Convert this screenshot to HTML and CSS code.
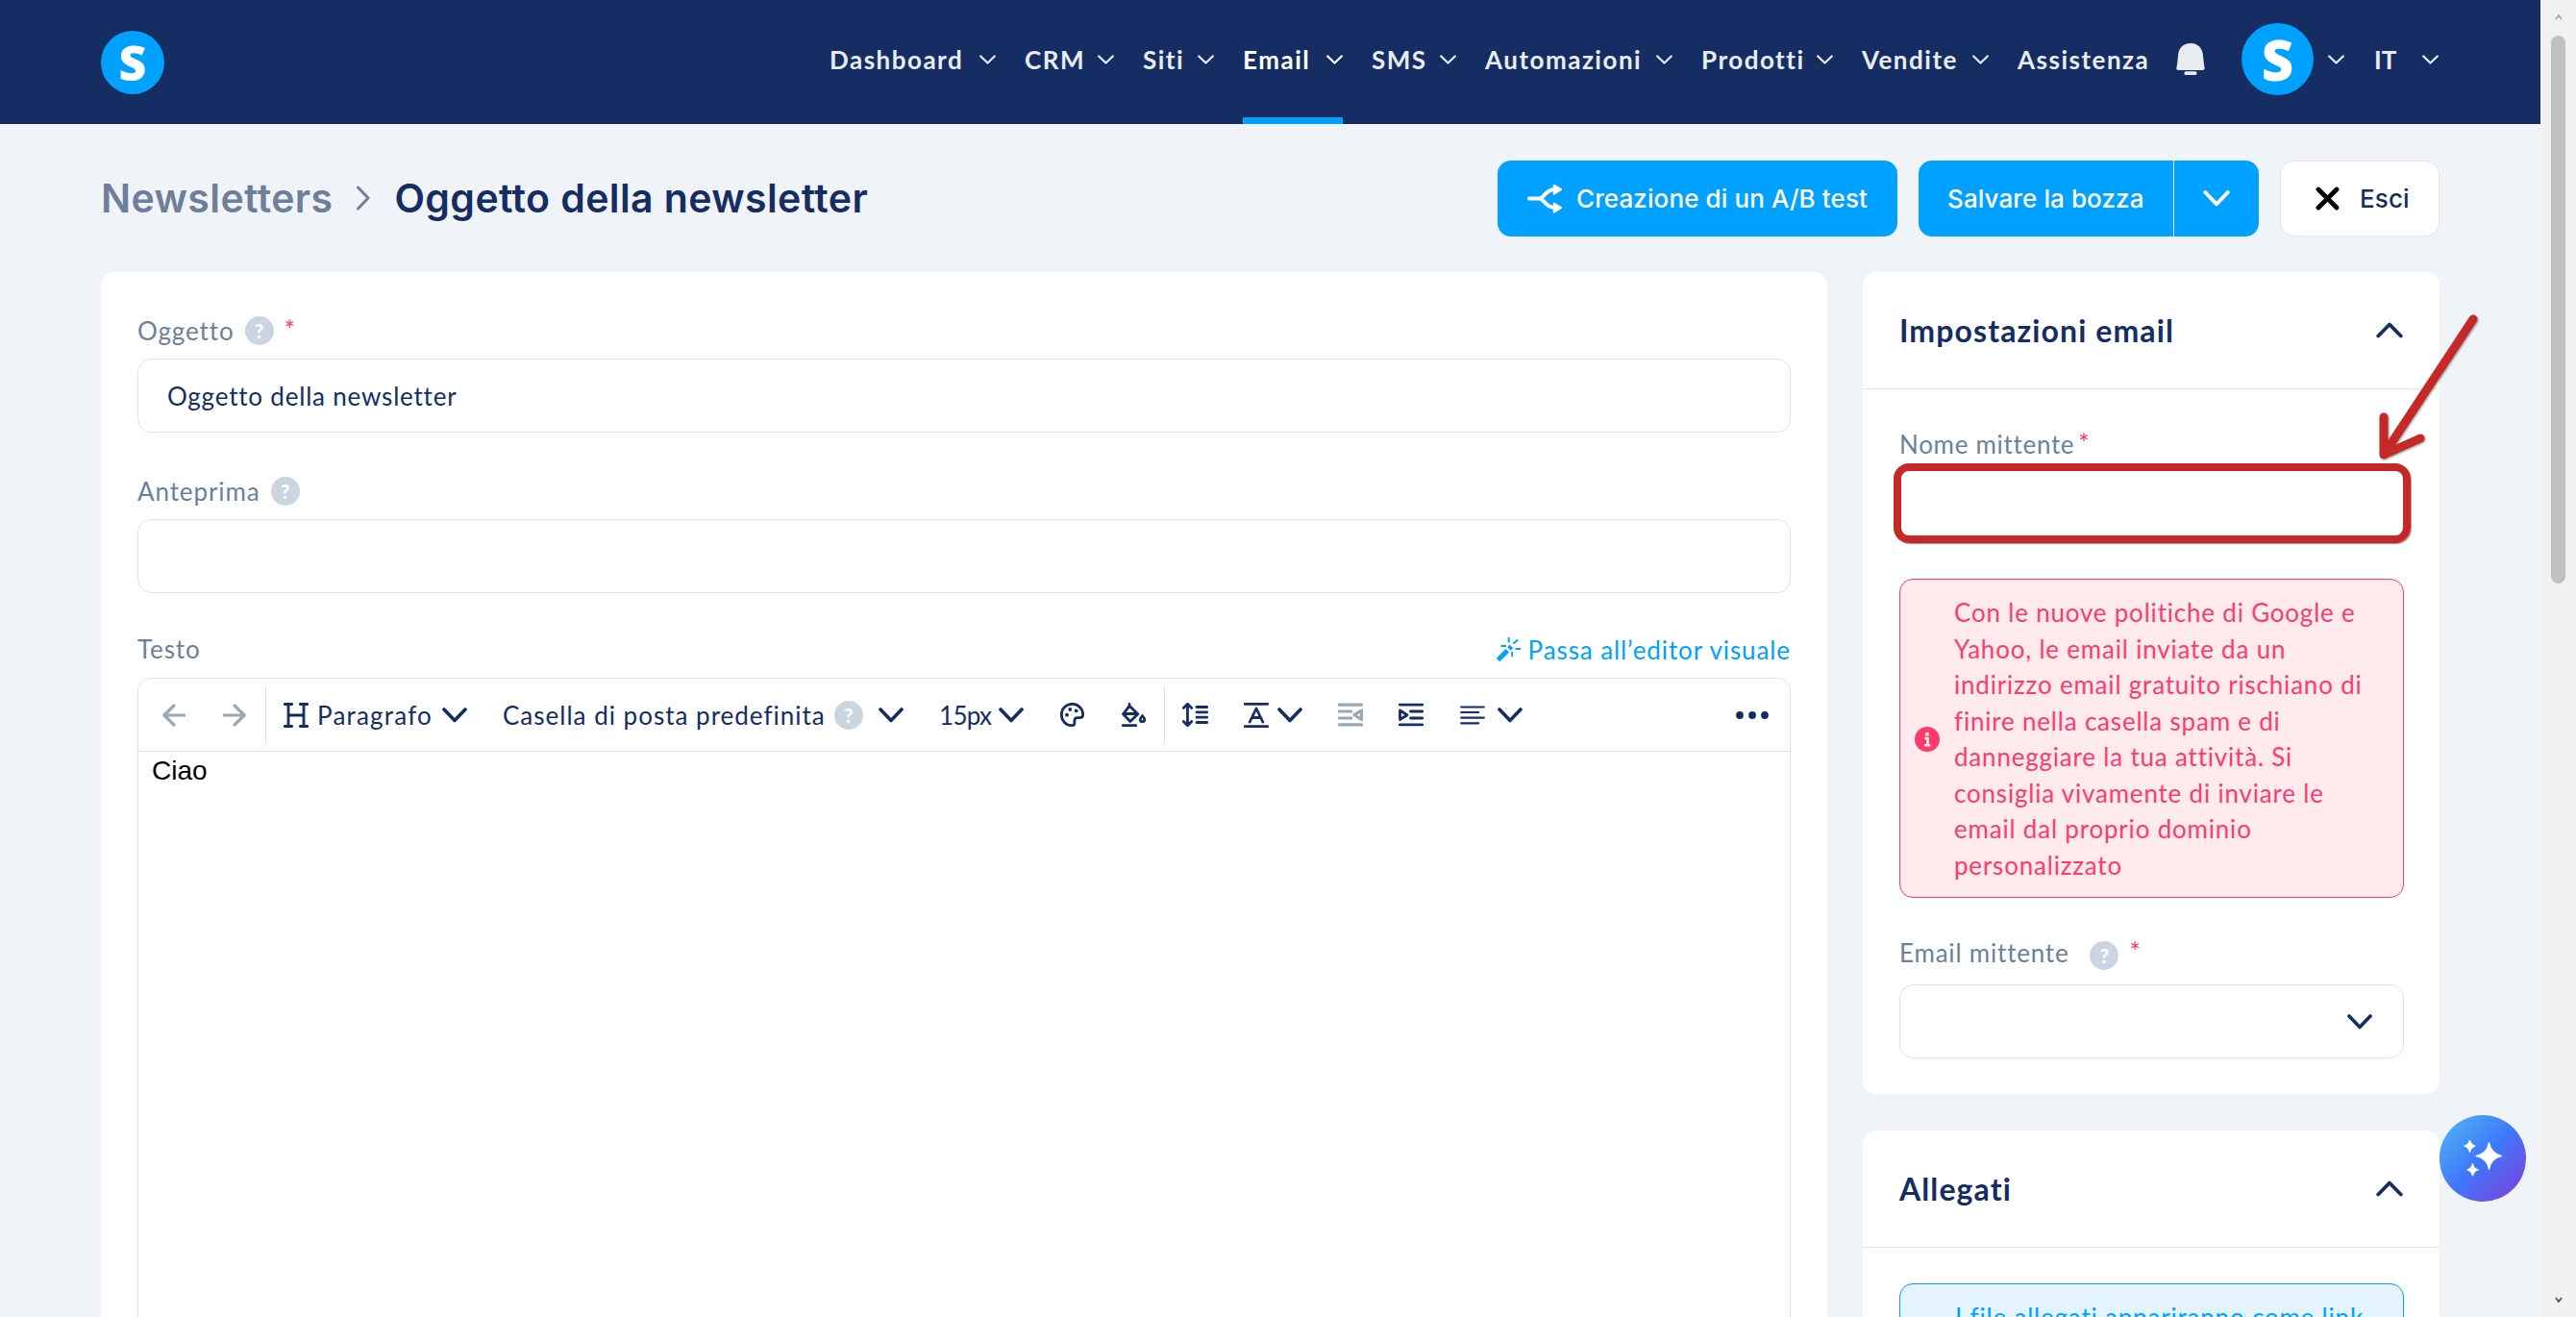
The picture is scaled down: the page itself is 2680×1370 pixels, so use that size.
FILE: index.html
```html
<!DOCTYPE html>
<html lang="it">
<head>
  <meta charset="UTF-8" />
  <meta name="viewport" content="width=device-width, initial-scale=1.0" />
  <title>Oggetto della newsletter</title>
  <link rel="stylesheet" href="styles.css">
</head>
<body>

  <svg class="defs" width="0" height="0">
    <symbol id="down" viewBox="0 0 26 16"><path d="M2 2l11 11.5L24 2" fill="none" stroke="currentColor" stroke-width="3.6" stroke-linecap="round" stroke-linejoin="round"/></symbol>
    <symbol id="up" viewBox="0 0 28 17"><path d="M2.2 14.5L14 2.5l11.8 12" fill="none" stroke="currentColor" stroke-width="3.8" stroke-linecap="round" stroke-linejoin="round"/></symbol>
    <symbol id="nav-down" viewBox="0 0 17 10"><path d="M1.2 1.5l7.3 7 7.3-7" fill="none" stroke="currentColor" stroke-width="2.2" stroke-linecap="round" stroke-linejoin="round"/></symbol>
  </svg>

  <div class="page">
    <header class="topbar">
      <div class="logo">S</div>
      <nav class="nav">
        <a class="nav-item dashboard"><span>Dashboard</span><svg><use href="#nav-down"/></svg></a>
        <a class="nav-item crm"><span>CRM</span><svg><use href="#nav-down"/></svg></a>
        <a class="nav-item siti"><span>Siti</span><svg><use href="#nav-down"/></svg></a>
        <a class="nav-item active"><span>Email</span><svg><use href="#nav-down"/></svg></a>
        <a class="nav-item sms"><span>SMS</span><svg><use href="#nav-down"/></svg></a>
        <a class="nav-item automazioni"><span>Automazioni</span><svg><use href="#nav-down"/></svg></a>
        <a class="nav-item prodotti"><span>Prodotti</span><svg><use href="#nav-down"/></svg></a>
        <a class="nav-item vendite"><span>Vendite</span><svg><use href="#nav-down"/></svg></a>
        <a class="nav-item assistenza"><span>Assistenza</span></a>
        <svg class="bell" viewBox="0 0 30 33"><path d="M15 0C7.500 0 2.500 5 2 13L1 22.500Q0 26 .5 27Q1 28 3 28H27Q29 28 29.500 27Q30 26 29 22.500L28 13C27.500 5 22.500 0 15 0z" fill="currentColor"/><rect x="8.500" y="29.300" width="13" height="3.700" rx="1.600" fill="currentColor"/></svg>
        <div class="avatar">S</div>
        <svg class="avatar-arrow"><use href="#nav-down"/></svg>
        <a class="nav-item lang"><span>IT</span><svg><use href="#nav-down"/></svg></a>
      </nav>
    </header>

    <div class="page-head">
      <div class="breadcrumb">
        <a>Newsletters</a>
        <svg viewBox="0 0 16 26"><path d="M2.500 2l10.500 11L2.500 24" fill="none" stroke="currentColor" stroke-width="3" stroke-linecap="round" stroke-linejoin="round"/></svg>
        <h1>Oggetto della newsletter</h1>
      </div>
      <div class="actions">
        <button class="btn ab-test">
          <svg viewBox="0 0 36 32"><path d="M2 15.500h10.500c5 0 6-9.500 16-9.500M12.500 15.500c5 0 6 9.500 16 9.500" fill="none" stroke="#fff" stroke-width="4" stroke-linecap="round"/><path d="M27.500 1.500v9.500l8-5zM27.500 20.500v9.500l8-5z" fill="#fff" stroke="#fff" stroke-width="1.500" stroke-linejoin="round"/></svg>
          <span>Creazione di un A/B test</span>
        </button>
        <div class="split">
          <button class="btn save"><span>Salvare la bozza</span></button>
          <button class="btn more"><svg><use href="#down"/></svg></button>
        </div>
        <button class="btn exit">
          <svg viewBox="0 0 25 25"><path d="M3 3l19 19M22 3L3 22" stroke="#000" stroke-width="4.800" stroke-linecap="round"/></svg>
          <span>Esci</span>
        </button>
      </div>
    </div>

    <main class="content">
      <section class="card editor-card">
        <div class="field">
          <label>Oggetto <i class="help">?</i><b class="req">*</b></label>
          <div class="input">Oggetto della newsletter</div>
        </div>
        <div class="field">
          <label>Anteprima <i class="help">?</i></label>
          <div class="input"></div>
        </div>
        <div class="text-row">
          <label>Testo</label>
          <a class="visual-link">
            <svg viewBox="0 0 26 26"><path d="M2.500 23.500L12.300 13.700" stroke="currentColor" stroke-width="5"/><path d="M14 12l2.500-2.500" stroke="currentColor" stroke-width="5"/><path d="M13.700 0v5.500M5.500 9H11M18.500 6.500l4.500-4M20.500 12H26M17.200 15v5" stroke="currentColor" stroke-width="1.900"/></svg>
            <span>Passa all’editor visuale</span>
          </a>
        </div>
        <div class="editor">
          <div class="toolbar">
            <svg class="muted i24" viewBox="0 0 24 24"><path d="M23 12H2M12 2L1.800 12 12 22" /></svg>
            <svg class="muted i24" viewBox="0 0 24 24"><path d="M1 12h21M12 2l10.200 10L12 22"/></svg>
            <span class="sep"></span>
            <svg class="i26" viewBox="0 0 26 26"><path d="M5 1.500v23M21 1.500v23M5 13h16M1.300 1.500h7.400M17.300 1.500h7.400M1.300 24.500h7.400M17.300 24.500h7.400"/></svg>
            <span class="t-par">Paragrafo</span>
            <svg class="arr"><use href="#down"/></svg>
            <span class="t-font">Casella di posta predefinita</span>
            <i class="help">?</i>
            <svg class="arr"><use href="#down"/></svg>
            <span class="t-size">15px</span>
            <svg class="arr"><use href="#down"/></svg>
            <svg class="i25" viewBox="0 0 25 25"><path d="M12.500 1.300C6 1.300 1.300 6.300 1.300 12.500S6 23.700 12 23.700c1.800 0 2.900-1 2.900-2.500v-2.700c0-1.700 1.100-2.800 2.700-2.800h2.700c2.200 0 3.400-1.300 3.400-3.500C23.500 6 18.800 1.300 12.500 1.300z"/><g class="solid"><circle cx="10.300" cy="7" r="1.900"/><circle cx="16.700" cy="8.300" r="1.900"/><circle cx="7" cy="12.700" r="1.900"/></g></svg>
            <svg class="i25" viewBox="0 0 25 25"><path d="M8 1.500v3M8 3.300l8.800 8.500L8.800 19.500 1.500 11.800zM2 11.500h14.500M1.300 23.700h13.500M21.500 13.500c-1.700 2.200-2.300 3-2.300 3.900a2.300 2.300 0 0 0 4.600 0c0-.9-.6-1.700-2.300-3.900z"/></svg>
            <span class="sep"></span>
            <svg class="i27" viewBox="0 0 27 25"><path d="M5.500 1.500v22M1.300 5.500l4.200-4.200 4.200 4.200M1.300 19.500l4.200 4.200 4.200-4.200M15 4.500h10.700M15 9.800h10.700M15 15.200h10.700M15 20.500h10.700"/></svg>
            <svg class="i26" viewBox="0 0 26 26"><path d="M1.300 1.300h23.400M1.300 24.700h23.400M6.200 20L13 6l6.800 14M8.500 15.500h9"/></svg>
            <svg class="arr"><use href="#down"/></svg>
            <svg class="muted i26" viewBox="0 0 26 26"><path d="M1.300 2.200h23.400M1.300 9h12.500M1.300 16h12.500M1.300 22.800h23.400M24.500 8v9.500L17 12.700z"/></svg>
            <svg class="i26" viewBox="0 0 26 26"><path d="M1.300 2.200h23.400M12.500 9h12.200M12.500 16h12.200M1.300 22.800h23.400M1.500 8v9.500L9 12.700z"/></svg>
            <svg class="i26" viewBox="0 0 26 26"><path d="M1.200 4.500h23.600M1.200 10h18M1.200 15.700h23.600M1.200 21.300h18" stroke-width="2.200"/></svg>
            <svg class="arr"><use href="#down"/></svg>
            <svg class="dots" viewBox="0 0 34 8"><g class="solid"><circle cx="4" cy="4" r="3.900"/><circle cx="17" cy="4" r="3.900"/><circle cx="30" cy="4" r="3.900"/></g></svg>
          </div>
          <div class="editor-body">Ciao</div>
        </div>
      </section>

      <aside class="side">
        <section class="card">
          <div class="card-head">
            <h2>Impostazioni email</h2>
            <svg><use href="#up"/></svg>
          </div>
          <div class="card-body">
            <label class="name-label">Nome mittente<b class="req">*</b></label>
            <div class="input name-input">
              <div class="highlight"></div>
              <svg class="pointer" viewBox="0 0 120 160"><path d="M105 13L12 154M12 115v39M12 154l38-17" fill="none" stroke="currentColor" stroke-width="9" stroke-linecap="round" stroke-linejoin="round"/></svg>
            </div>
            <div class="alert danger">
              <svg viewBox="0 0 26 26"><circle cx="13" cy="13" r="13" fill="currentColor"/><circle cx="13" cy="7.800" r="2" fill="#ffeaee"/><path d="M10.200 12h3.300v7M10 19.200h6.200" fill="none" stroke="#ffeaee" stroke-width="2.600"/></svg>
              <p>Con le nuove politiche di Google e<br>Yahoo, le email inviate da un<br>indirizzo email gratuito rischiano di<br>finire nella casella spam e di<br>danneggiare la tua attività. Si<br>consiglia vivamente di inviare le<br>email dal proprio dominio<br>personalizzato</p>
            </div>
            <label class="from-label">Email mittente <i class="help">?</i><b class="req">*</b></label>
            <div class="input select"><svg class="arr"><use href="#down"/></svg></div>
          </div>
        </section>

        <section class="card">
          <div class="card-head">
            <h2>Allegati</h2>
            <svg><use href="#up"/></svg>
          </div>
          <div class="card-body">
            <div class="alert info">
              <p>I file allegati appariranno come link</p>
            </div>
          </div>
        </section>
      </aside>
    </main>

    <button class="assistant">
      <svg viewBox="0 0 40 38"><path d="M26.500 2.500Q28.500 14 40 16.500Q28.500 19 26.500 30.500Q24.500 19 13 16.500Q24.500 14 26.500 2.500zM6.500 0Q7.500 5 12 6.200Q7.500 7.500 6.500 12.500Q5.500 7.500 1 6.200Q5.500 5 6.500 0zM9.500 24.500Q10.500 29.500 15 30.800Q10.500 32 9.500 37Q8.500 32 4 30.800Q8.500 29.500 9.500 24.500z" fill="#fff" stroke="#fff" stroke-width="1.200" stroke-linejoin="round"/></svg>
    </button>
  </div>

  <div class="scrollbar">
    <svg viewBox="0 0 8 6"><path d="M1 5l3-4 3 4" fill="none" stroke="#a8a8a8" stroke-width="1.800"/></svg>
    <div class="thumb"></div>
    <svg class="bottom" viewBox="0 0 8 6"><path d="M1 1l3 4 3-4" fill="none" stroke="#505050" stroke-width="1.800"/></svg>
  </div>

</body>
</html>
```

FILE: styles.css
```css
* {
  box-sizing: border-box;
}

body {
  margin: 0;
  height: 1370px;
  display: flex;
  overflow: hidden;
  background: #f0f4f9;
  color: #152d63;
  font-family: Lato, "Open Sans", sans-serif;
  font-size: 26px;
  letter-spacing: 0.8px;
}

.defs {
  position: absolute;
}

h1,
h2,
p {
  margin: 0;
}

svg {
  display: block;
  flex: none;
}

button {
  border: none;
  padding: 0;
}

.page {
  position: relative;
  width: 2643px;
  height: 1370px;
  overflow: hidden;
}

/* top bar */
.topbar {
  height: 129px;
  background: #152d63;
  display: flex;
  align-items: center;
  padding-left: 105px;
}

.logo,
.avatar {
  display: flex;
  align-items: center;
  justify-content: center;
  border-radius: 50%;
  background: #00a1ff;
  color: #fff;
  font-family: "Open Sans", sans-serif;
  font-weight: 800;
  letter-spacing: 0;
}

.logo {
  width: 66px;
  height: 66px;
  font-size: 50px;
  line-height: 66px;
}

.avatar {
  width: 75px;
  height: 75px;
  font-size: 58px;
  line-height: 75px;
}

.nav {
  display: grid;
  grid-template-columns: 203px 123px 104px 134px 118px 225px 167px 162px 165px 68px 90px 48px 67px;
  align-items: center;
  height: 129px;
  padding-bottom: 6px;
  margin-left: 692px;
  color: #e9ecef;
}

.nav-item {
  display: flex;
  align-items: center;
  justify-content: space-between;
  height: 123px;
  margin-right: 30px;
  font-weight: 700;
  white-space: nowrap;
  letter-spacing: 1.5px;
}

.nav-item svg,
.avatar-arrow {
  width: 17px;
  height: 10px;
}

.nav-item.active {
  color: #fff;
  height: 129px;
  margin-bottom: -6px;
  padding-top: 1px;
  border-bottom: 7px solid #00a1ff;
}

.nav-item.lang {
  margin-right: 0;
  letter-spacing: 0;
}

.bell {
  width: 30px;
  height: 33px;
}

/* title row */
.page-head {
  display: flex;
  align-items: center;
  justify-content: space-between;
  padding: 38px 105px 37px;
}

.breadcrumb {
  display: flex;
  align-items: center;
  padding-bottom: 1px;
  color: #6d7f9a;
  font-family: Inter, sans-serif;
  font-size: 41px;
  font-weight: 600;
  letter-spacing: 0.4px;
}

.breadcrumb svg {
  width: 16px;
  height: 26px;
  margin: 0 24px 0 24px;
}

.breadcrumb h1 {
  color: #152d63;
  font-size: 41px;
  font-weight: 600;
}

.actions {
  display: flex;
  gap: 22px;
}

.btn {
  display: flex;
  align-items: center;
  height: 79px;
  border-radius: 14px;
  background: #00a1ff;
  color: #fff;
  font-family: Inter, sans-serif;
  font-size: 26px;
  font-weight: 500;
  letter-spacing: 0.1px;
  white-space: nowrap;
}

.ab-test {
  width: 416px;
  padding-left: 31px;
  gap: 15px;
}

.ab-test svg {
  width: 36px;
  height: 32px;
}

.split {
  display: flex;
}

.save {
  width: 265px;
  padding-left: 30px;
  border-radius: 14px 0 0 14px;
}

.more {
  width: 89px;
  justify-content: center;
  border-left: 1px solid #fff;
  border-radius: 0 14px 14px 0;
}

.more svg {
  width: 28px;
  height: 17px;
}

.exit {
  width: 166px;
  padding-left: 36px;
  gap: 21px;
  border: 1px solid #e1e5ea;
  background: #fff;
  color: #152d63;
}

.exit svg {
  width: 25px;
  height: 25px;
}

/* columns */
.content {
  display: grid;
  grid-template-columns: 1796px 600px;
  gap: 37px;
  padding-left: 105px;
}

.card {
  background: #fff;
  border-radius: 14px;
}

.editor-card {
  height: 1200px;
  padding: 37px 38px;
}

label {
  display: flex;
  align-items: center;
  height: 47px;
  color: #6d7f9a;
  letter-spacing: 0.9px;
}

.help {
  display: flex;
  align-items: center;
  justify-content: center;
  width: 30px;
  height: 30px;
  margin-left: 11px;
  border-radius: 50%;
  background: #cbd5e1;
  color: #fff;
  font-size: 20px;
  font-style: normal;
  font-weight: 900;
  letter-spacing: 0;
}

.req {
  height: 32px;
  margin-left: 11px;
  color: #ff3b6b;
  font-size: 27px;
  font-weight: 400;
  line-height: 30px;
  letter-spacing: 0;
}

.input {
  display: flex;
  align-items: center;
  height: 77px;
  padding: 1px 30px 0;
  border: 1px solid #e1e4e6;
  border-radius: 14px;
}

.field {
  margin-bottom: 37px;
}

.field .input {
  margin-top: 6px;
}

.text-row {
  display: flex;
  justify-content: space-between;
  height: 42px;
  margin-bottom: 9px;
}

.text-row label {
  height: 41px;
}

.visual-link {
  display: flex;
  align-items: center;
  gap: 8px;
  padding-top: 2px;
  color: #00a1ff;
  letter-spacing: 0.9px;
}

.visual-link svg {
  width: 26px;
  height: 26px;
}

.editor {
  height: 900px;
  border: 1px solid #e1e4e6;
  border-radius: 14px;
}

.toolbar {
  display: grid;
  grid-template-columns: 63px 44px 19px 35px 130px 63px 345px 46px 63px 62px 64px 64px 44px 19px 64px 35px 63px 63px 64px 39px 248px 34px;
  align-items: center;
  height: 76px;
  padding-left: 25px;
  border-bottom: 1px solid #e1e4e6;
  white-space: nowrap;
}

.toolbar svg:not(.arr) {
  fill: none;
  stroke: currentColor;
  stroke-width: 2.8;
  stroke-linecap: round;
  stroke-linejoin: round;
}

.toolbar .solid {
  fill: currentColor;
  stroke: none;
}

.toolbar svg.muted {
  color: #9aa8b3;
  stroke-width: 3.2;
}

.toolbar .help {
  margin: 0;
}

.t-par {
  letter-spacing: 1.2px;
}

.t-font {
  letter-spacing: 1px;
}

.t-size {
  letter-spacing: -0.7px;
}

.sep {
  width: 1px;
  height: 60px;
  background: #e1e4e6;
}

.arr {
  width: 26px;
  height: 16px;
}

.i24 {
  width: 24px;
  height: 24px;
}

.i25 {
  width: 25px;
  height: 25px;
}

.i26 {
  width: 26px;
  height: 26px;
}

.i27 {
  width: 27px;
  height: 25px;
}

.dots {
  width: 34px;
  height: 8px;
}

.editor-body {
  padding: 4px 14px;
  color: #000;
  font-family: "Liberation Sans", Arial, sans-serif;
  font-size: 28px;
  line-height: 32px;
  letter-spacing: 0;
}

/* side column */
.side {
  display: flex;
  flex-direction: column;
  gap: 38px;
}

.card-head {
  display: flex;
  align-items: center;
  justify-content: space-between;
  height: 122px;
  padding: 0 38px;
  border-bottom: 1px solid #e1e4e6;
}

.card-head h2 {
  font-size: 32px;
  font-weight: 700;
  letter-spacing: 1.1px;
}

.card-head svg {
  width: 28px;
  height: 17px;
}

.card-body {
  padding: 37px 37px 37px 38px;
}

.name-label {
  height: 42px;
  padding-bottom: 2px;
  letter-spacing: 0.7px;
}

.name-label .req {
  margin-left: 4px;
}

.name-input {
  position: relative;
  margin-bottom: 41px;
}

.highlight {
  position: absolute;
  inset: -3px -8px -5px -7px;
  border: 8px solid #c62828;
  border-radius: 16px;
  box-shadow: 1px 1px 1px rgba(0, 0, 0, 0.4);
}

.pointer {
  position: absolute;
  top: -166px;
  right: -88px;
  width: 120px;
  height: 160px;
  color: #c62828;
  filter: drop-shadow(1px 1px 1px rgba(0, 0, 0, 0.4));
}

.alert {
  display: flex;
  align-items: center;
  gap: 15px;
  padding: 16px 15px 14px;
  border: 1px solid;
  border-radius: 14px;
  line-height: 37.5px;
  white-space: nowrap;
}

.alert svg {
  width: 26px;
  height: 26px;
}

.danger {
  margin-bottom: 37px;
  background: #ffeaee;
  color: #ff3b6b;
}

.info {
  height: 120px;
  padding-left: 57px;
  align-items: flex-start;
  background: #e3f4ff;
  color: #00a1ff;
}

.from-label {
  height: 39px;
  margin-bottom: 14px;
  letter-spacing: 0.8px;
}

.from-label .help {
  margin: 6px 0 0 22px;
}

.select {
  justify-content: flex-end;
  padding-right: 32px;
}

/* floating assistant button */
.assistant {
  position: absolute;
  right: 15px;
  bottom: 120px;
  display: flex;
  align-items: center;
  justify-content: center;
  width: 90px;
  height: 90px;
  border-radius: 50%;
  background: linear-gradient(135deg, #4db2f5 5%, #3f78fb 50%, #7e3fdc 95%);
}

.assistant svg {
  width: 40px;
  height: 38px;
}

.scrollbar {
  display: flex;
  flex-direction: column;
  align-items: center;
  width: 37px;
  height: 1370px;
  padding: 15px 0;
  background: #f1f1f1;
}

.scrollbar svg {
  width: 8px;
  height: 6px;
}

.thumb {
  width: 15px;
  height: 570px;
  margin-top: 16px;
  border-radius: 8px;
  background: #c1c1c1;
}

.scrollbar .bottom {
  margin-top: auto;
}
```
